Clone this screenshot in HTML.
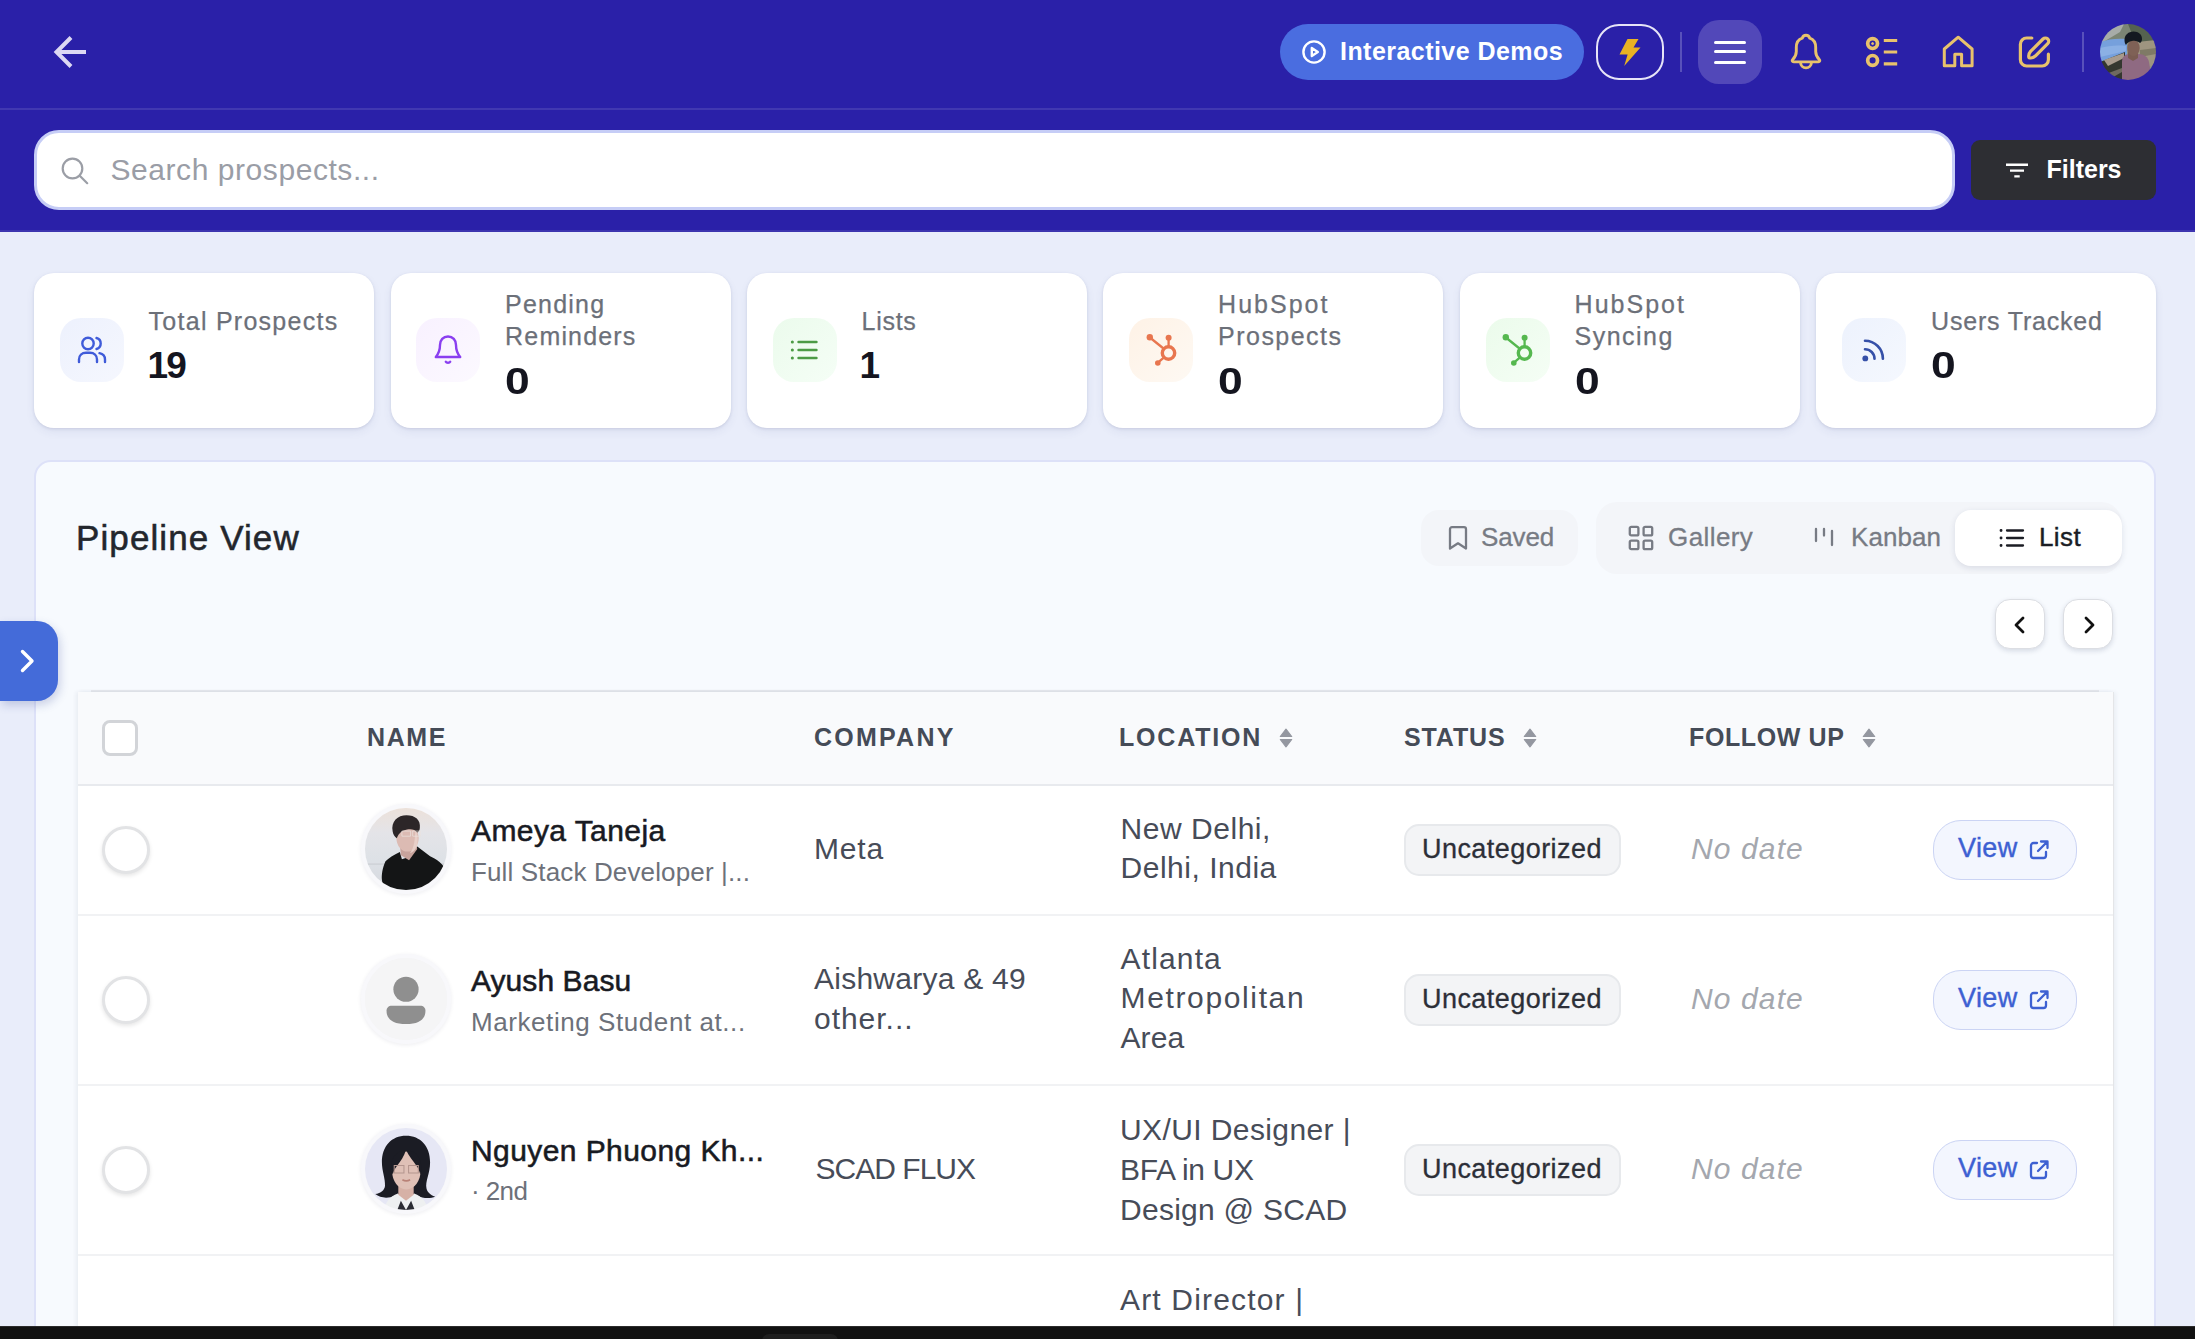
<!DOCTYPE html>
<html lang="en">
<head>
<meta charset="utf-8">
<title>Pipeline View</title>
<style>
*{box-sizing:border-box;margin:0;padding:0}
html,body{width:2195px;height:1339px;overflow:hidden}
body{position:relative;background:#e9edfa;font-family:"Liberation Sans",sans-serif;color:#1b1d26}
.abs{position:absolute}
.t{position:absolute;white-space:nowrap;line-height:1}

/* ---------- top bar ---------- */
.top{position:absolute;left:0;top:0;width:2195px;height:232px;background:#2a20a8}
.top .rule{position:absolute;left:0;top:108px;width:2195px;height:2px;background:rgba(255,255,255,.11)}
.demo{position:absolute;left:1280px;top:24px;width:304px;height:56px;border-radius:28px;background:#4a6de0}
.bolt{position:absolute;left:1596px;top:24px;width:68px;height:56px;border-radius:23px;border:2px solid #e6e4f7}
.vsep{position:absolute;top:32px;width:2px;height:40px;background:rgba(255,255,255,.22)}
.burger{position:absolute;left:1698px;top:20px;width:64px;height:64px;border-radius:21px;background:#5248b9}
.burger i{position:absolute;left:16px;width:32px;height:3px;border-radius:2px;background:#fff}
.me{position:absolute;left:2100px;top:24px;width:56px;height:56px;border-radius:50%;overflow:hidden}

.search{position:absolute;left:34px;top:130px;width:1921px;height:80px;border-radius:25px;background:#fff;border:3.500px solid #c6cdf6}
.filters{position:absolute;left:1971px;top:140px;width:185px;height:60px;border-radius:9px;background:#2d2e33}

/* ---------- stat cards ---------- */
.plate{position:absolute;top:273px;width:340px;height:155px;border-radius:20px;background:#fff;box-shadow:0 1px 3px rgba(40,50,100,.13),0 4px 10px rgba(60,70,130,.07)}
.card{position:absolute;top:273px;width:338.500px;height:155px}
.card .ico{position:absolute;left:25.400px;top:45px;width:64px;height:64px;border-radius:21px}
.card .ico svg{position:absolute;left:0;top:0}
.lbl{font-size:25px;color:#6c7079;letter-spacing:1.05px;-webkit-text-stroke:.25px #6c7079}
.val{font-size:37px;font-weight:700;color:#14151f;transform-origin:0 50%}
.val.z{transform:scaleX(1.2)}

/* ---------- panel ---------- */
.panel{position:absolute;left:34px;top:460px;width:2122px;height:900px;border-radius:17px;background:#f7fafe;border:2px solid #dde1f8}
.h1{font-size:35px;color:#23262d;letter-spacing:1.1px;-webkit-text-stroke:.55px #23262d}
.pill{position:absolute;border-radius:18px;background:#f3f5f9}
.tab{font-size:26px;color:#777b84;-webkit-text-stroke:.3px #777b84}
.on{position:absolute;left:1955px;top:510px;width:167px;height:56px;border-radius:16px;background:#fff;box-shadow:0 2px 6px rgba(30,40,80,.12)}
.pg{position:absolute;top:599px;width:50px;height:50px;border-radius:15px;background:#fff;border:1.500px solid #dcdee3;box-shadow:0 2px 5px rgba(30,40,80,.15)}

/* ---------- table ---------- */
.tbl{position:absolute;left:78px;top:692px;width:2034.500px;height:700px;background:#fff;box-shadow:-2px 0 4px rgba(40,50,90,.07),1px 0 0 #e6e7ea,3px 0 4px rgba(40,50,90,.06)}
.thead{position:absolute;left:0;top:0;width:100%;height:92px;background:#f9fafc}
.hr{position:absolute;left:0;width:100%;height:2px;background:#f1f2f4}
.th{font-size:25px;font-weight:700;color:#454b57;letter-spacing:1.5px}
.cb{position:absolute;left:24px;top:28px;width:36px;height:36px;border-radius:8px;border:3px solid #d2d4d8;background:#fff}
.rad{position:absolute;left:24px;width:48px;height:48px;border-radius:50%;border:3px solid #e2e3e5;background:#fff;box-shadow:0 2px 4px rgba(0,0,0,.10)}
.av{position:absolute;left:283px;width:90px;height:90px;border-radius:50%;background:#fafafa;border:4px solid #f8f8fb;box-shadow:0 1px 4px rgba(30,30,60,.08);overflow:hidden}
.nm{font-size:30px;color:#181a22;letter-spacing:.42px;-webkit-text-stroke:.55px #181a22}
.sub{font-size:26px;color:#6d717a}
.c{font-size:30px;color:#474c58;letter-spacing:.5px}
.badge{position:absolute;left:1326px;width:217px;height:52px;border-radius:15px;background:#f3f4f6;border:2px solid #e7e9ec}
.badge span{position:absolute;left:16px;top:10px;font-size:27px;line-height:1;letter-spacing:.45px;color:#2c2f38;-webkit-text-stroke:.3px #2c2f38;white-space:nowrap}
.nd{font-size:30px;font-style:italic;color:#a4a7ae;letter-spacing:1.12px}
.view{position:absolute;left:1855px;width:144px;height:60px;border-radius:28px;background:#f3f6fe;border:1.500px solid #cbd4f4}
.view span{position:absolute;left:24px;top:14px;font-size:27px;line-height:1;letter-spacing:.4px;color:#3d60d2;-webkit-text-stroke:.4px #3d60d2}
.view svg{position:absolute;left:94px;top:18px}

.av svg,.me svg{display:block}
.photo{filter:blur(.7px)}
.side{position:absolute;left:0;top:621px;width:58px;height:80px;border-radius:0 21px 21px 0;background:#446bd9;box-shadow:2px 4px 10px rgba(40,60,140,.22)}
.dock{position:absolute;left:0;top:1326px;width:2195px;height:13px;background:#111;border-top:1px solid #2b2b2b}
.dock i{position:absolute;left:762px;top:7px;width:76px;height:8px;border-radius:7px 7px 0 0;background:#1e1e1e}
</style>
</head>
<body>

<!-- ================= TOP BAR ================= -->
<div class="top">
  <div class="rule"></div><div class="rule" style="top:230px;background:rgba(255,255,255,.09)"></div>
  <svg class="abs" style="left:52px;top:34px" width="38" height="36" viewBox="0 0 38 36" fill="none" stroke="#dcd8f3" stroke-width="4" stroke-linecap="butt" stroke-linejoin="miter"><path d="M34 18H5M19 3.5L4.5 18 19 32.5"/></svg>

  <div class="demo">
    <svg class="abs" style="left:22px;top:16px" width="24" height="24" viewBox="0 0 24 24" fill="none" stroke="#fff" stroke-width="2.4" stroke-linejoin="round"><circle cx="12" cy="12" r="10.6"/><path d="M9.8 8l6 4-6 4z"/></svg>
    <span class="t" style="left:60px;top:15px;font-size:25px;font-weight:700;color:#fff;letter-spacing:.45px">Interactive Demos</span>
  </div>
  <div class="bolt">
    <svg class="abs" style="left:21px;top:12.500px" width="22" height="27" viewBox="0 0 22 27"><path d="M8.5 0h11l-5 8.6h7L5.2 27l3.4-11.6H.5z" fill="#e9b223"/></svg>
  </div>
  <div class="vsep" style="left:1680px"></div>
  <div class="burger"><i style="top:21px"></i><i style="top:30px"></i><i style="top:41px"></i></div>

  <!-- bell -->
  <svg class="abs" style="left:1790px;top:33px" width="32" height="38" viewBox="0 0 32 38" fill="none" stroke="#e8c26c" stroke-width="2.9" stroke-linejoin="round" stroke-linecap="round"><path d="M16 2.2c-2 0-3.300 1.300-3.700 3C8.300 6.500 6.300 10 6.300 14.500v4c0 3.200-1.200 5.700-3.600 8-1 1-.5 2.400 1 2.400h24.600c1.500 0 2-1.400 1-2.400-2.400-2.300-3.600-4.800-3.600-8v-4c0-4.500-2-8-6-9.300-.4-1.700-1.700-3-3.700-3z"/><path d="M10.600 29.500a5.400 5.400 0 0 0 10.800 0"/></svg>
  <!-- list -->
  <svg class="abs" style="left:1864px;top:35px" width="36" height="34" viewBox="0 0 36 34" fill="none" stroke="#e8c26c" stroke-width="3.2"><circle cx="8.600" cy="8.600" r="4.900" stroke-width="3.700"/><circle cx="8.600" cy="25.400" r="4.900" stroke-width="3.700"/><circle cx="8.600" cy="8.600" r="1" fill="#e8c26c" stroke-width="1"/><path d="M19.800 5.500h13.400M19.800 17h13.400M19.800 28.800h13.400"/></svg>
  <!-- home -->
  <svg class="abs" style="left:1942px;top:35px" width="33" height="34" viewBox="0 0 33 34" fill="none" stroke="#e8c26c" stroke-width="3" stroke-linejoin="round"><path d="M16.200 2.200L2.300 14v16.800h10.500V19.300h6.800v11.500h10.500V14z"/></svg>
  <!-- edit -->
  <svg class="abs" style="left:2018px;top:35px" width="33" height="34" viewBox="0 0 33 34" fill="none" stroke="#e8c26c" stroke-width="3.200" stroke-linecap="round" stroke-linejoin="round"><path d="M13.800 3H8.600a6.200 6.200 0 0 0-6.200 6.200v15.600A6.200 6.200 0 0 0 8.600 31h15.600a6.200 6.200 0 0 0 6.200-6.200v-5.600"/><path d="M12.600 16.400L25 4a3.300 3.300 0 0 1 4.700 4.700L17.300 21.100c-2 1.600-4.600 2.200-6.300 1.600-.600-1.800 0-4.400 1.600-6.300z"/></svg>

  <div class="vsep" style="left:2082px"></div>
  <div class="me">
    <svg class="photo" width="56" height="56" viewBox="0 0 56 56">
      <rect width="56" height="56" fill="#8f9481"/>
      <path d="M0 0h56v18H0z" fill="#7b8574"/>
      <path d="M0 0h24l-4 8-10 6-10 6z" fill="#a7aca8"/>
      <path d="M28 0h20l8 14v6H36z" fill="#55624f"/>
      <path d="M0 18c8-3 18-4 27-3v16L0 40z" fill="#76a0dc"/>
      <path d="M0 24c8-2 16-3 26-2v5L0 33z" fill="#8bb0e4"/>
      <path d="M37 18l19-2v26H37z" fill="#9e9580"/>
      <path d="M40 26l16-2v6l-16 3z" fill="#7f7a66"/>
      <path d="M0 38l25-10v28H0z" fill="#34372f"/>
      <path d="M4 36l20-7v5L8 42z" fill="#a89b8d"/>
      <path d="M6 50l16-6v4L8 56z" fill="#6f6a60"/>
      <path d="M22 56V38c0-5 3-8 7-8h10c5 0 9 3 10 8l3 18z" fill="#8f6a82"/>
      <path d="M28 28h10v6l-5 3-5-3z" fill="#7a5c52"/>
      <ellipse cx="33.500" cy="24" rx="6.200" ry="8" fill="#7f6156"/>
      <path d="M24.500 16c0-5 4-8.500 9-8.500s9 3 8.500 8c-.200 2-1 3-2 3.500-2-2-5-2.500-8-2-3 .500-5 2-6 4-1-1-1.500-3-1.500-5z" fill="#131920"/>
    </svg>
  </div>

  <div class="search">
    <svg class="abs" style="left:22.500px;top:22.500px" width="30" height="30" viewBox="0 0 30 30" fill="none" stroke="#9b9ea6" stroke-width="2.200" stroke-linecap="round"><circle cx="12.500" cy="12.500" r="9.800"/><path d="M20 20l7.200 7.200"/></svg>
    <span class="t" style="left:73.500px;top:11.500px;font-size:30px;line-height:50px;color:#9a9da6;letter-spacing:.56px">Search prospects...</span>
  </div>
  <div class="filters">
    <svg class="abs" style="left:34px;top:23px" width="24" height="16" viewBox="0 0 24 16" fill="none" stroke="#fff" stroke-width="2.400"><path d="M1 1.800h22M5 7.600h14M9.300 13.400h5.400"/></svg>
    <span class="t" style="left:75.500px;top:17px;font-size:25px;font-weight:700;color:#fff">Filters</span>
  </div>
</div>

<!-- ================= STAT CARDS ================= -->
<div class="plate" style="left:34.300px"></div><div class="plate" style="left:390.600px"></div><div class="plate" style="left:746.900px"></div><div class="plate" style="left:1103.200px"></div><div class="plate" style="left:1459.500px"></div><div class="plate" style="left:1815.800px"></div>
<div class="card" style="left:34.600px">
  <div class="ico" style="background:linear-gradient(135deg,#edf1fd,#f5f7fe)">
    <svg width="64" height="64" viewBox="0 0 64 64" fill="none" stroke="#3f5bd9" stroke-width="2.400" stroke-linecap="round"><circle cx="28" cy="25.500" r="5.700"/><path d="M19 44v-2.500c0-4 3-6.700 7-6.700h4c4 0 7 2.700 7 6.700V44"/><path d="M36.500 20a5.700 5.700 0 0 1 0 11"/><path d="M39.500 35.200c3.300.7 5.500 3.100 5.500 6.300V44"/></svg>
  </div>
  <span class="t lbl" style="left:114px;top:36px;letter-spacing:1.26px">Total Prospects</span>
  <span class="t val" style="left:113px;top:74px;letter-spacing:-1.8px">19</span>
</div>

<div class="card" style="left:391.100px">
  <div class="ico" style="background:linear-gradient(135deg,#f8f1ff,#fcf9ff)">
    <svg width="64" height="64" viewBox="0 0 64 64" fill="none" stroke="#8a3ff0" stroke-width="2.400" stroke-linecap="round" stroke-linejoin="round"><path d="M32 18.500c-4.800 0-8 3.600-8 8.500 0 6.500-2.200 9.600-4.200 12h24.400c-2-2.400-4.200-5.500-4.200-12 0-4.900-3.200-8.500-8-8.500z"/><path d="M29.800 43.800c.7 1.300 3.700 1.300 4.400 0"/></svg>
  </div>
  <span class="t lbl" style="left:114px;top:19px;letter-spacing:1.2px">Pending</span>
  <span class="t lbl" style="left:114px;top:51px;letter-spacing:1.17px">Reminders</span>
  <span class="t val z" style="left:114px;top:90px">0</span>
</div>

<div class="card" style="left:747.600px">
  <div class="ico" style="background:linear-gradient(135deg,#ebfbec,#f5fef6)">
    <svg width="64" height="64" viewBox="0 0 64 64" fill="none" stroke="#4c9b45" stroke-width="2.400" stroke-linecap="round"><path d="M25.500 24h18M25.500 32h18M25.500 40h18"/><path d="M19.300 24h.1M19.300 32h.1M19.300 40h.1" stroke-width="3"/></svg>
  </div>
  <span class="t lbl" style="left:114px;top:36px;letter-spacing:.7px">Lists</span>
  <span class="t val" style="left:112px;top:74px">1</span>
</div>

<div class="card" style="left:1104.100px">
  <div class="ico" style="background:linear-gradient(135deg,#fef2e6,#fef9f3)">
    <svg style="left:1.500px" width="64" height="64" viewBox="0 0 64 64" fill="none" stroke="#e8764f" stroke-width="2.300" stroke-linecap="round"><circle cx="37.500" cy="35" r="6.200" stroke-width="3.400"/><circle cx="18.800" cy="19.200" r="3.200" fill="#e8764f" stroke="none"/><circle cx="37.600" cy="19.800" r="3" fill="#e8764f" stroke="none"/><circle cx="26.800" cy="45" r="2.800" fill="#e8764f" stroke="none"/><path d="M19.500 20l13 10.500M37.600 20.500v8M27.500 44.200l5.300-4.600"/></svg>
  </div>
  <span class="t lbl" style="left:114px;top:19px;letter-spacing:2px">HubSpot</span>
  <span class="t lbl" style="left:114px;top:51px;letter-spacing:1.46px">Prospects</span>
  <span class="t val z" style="left:114px;top:90px">0</span>
</div>

<div class="card" style="left:1460.600px">
  <div class="ico" style="background:linear-gradient(135deg,#ebfbeb,#f5fef5)">
    <svg style="left:1.500px" width="64" height="64" viewBox="0 0 64 64" fill="none" stroke="#55b84f" stroke-width="2.300" stroke-linecap="round"><circle cx="37.500" cy="35" r="6.200" stroke-width="3.400"/><circle cx="18.800" cy="19.200" r="3.200" fill="#55b84f" stroke="none"/><circle cx="37.600" cy="19.800" r="3" fill="#55b84f" stroke="none"/><circle cx="26.800" cy="45" r="2.800" fill="#55b84f" stroke="none"/><path d="M19.500 20l13 10.500M37.600 20.500v8M27.500 44.200l5.300-4.600"/></svg>
  </div>
  <span class="t lbl" style="left:114px;top:19px;letter-spacing:2px">HubSpot</span>
  <span class="t lbl" style="left:114px;top:51px;letter-spacing:1.46px">Syncing</span>
  <span class="t val z" style="left:114px;top:90px">0</span>
</div>

<div class="card" style="left:1817.100px">
  <div class="ico" style="background:linear-gradient(135deg,#edf2fd,#f5f8fe)">
    <svg width="64" height="64" viewBox="0 0 64 64" fill="none" stroke="#3650a8" stroke-width="2.600" stroke-linecap="round"><path d="M23 31.200a9.500 9.500 0 0 1 9.500 9.500M23 22.800a17.900 17.900 0 0 1 17.900 17.900"/><circle cx="23.300" cy="40.400" r="2.900" fill="#3650a8" stroke="none"/></svg>
  </div>
  <span class="t lbl" style="left:114px;top:36px;letter-spacing:.81px">Users Tracked</span>
  <span class="t val z" style="left:114px;top:74px">0</span>
</div>

<!-- ================= PANEL ================= -->
<div class="panel"></div>
<span class="t h1" style="left:76px;top:520px">Pipeline View</span>

<div class="pill" style="left:1421px;top:510px;width:157px;height:56px"></div>
<svg class="abs" style="left:1447px;top:525px" width="22" height="26" viewBox="0 0 22 26" fill="none" stroke="#777b84" stroke-width="2.300" stroke-linejoin="round"><path d="M3 4.200a2 2 0 0 1 2-2h12a2 2 0 0 1 2 2v19.300l-8-5.200-8 5.200z"/></svg>
<span class="t tab" style="left:1481px;top:524px;letter-spacing:-.1px">Saved</span>

<div class="pill" style="left:1596px;top:502px;width:526px;height:72px;border-radius:21px"></div>
<svg class="abs" style="left:1628px;top:525px" width="26" height="26" viewBox="0 0 26 26" fill="none" stroke="#777b84" stroke-width="2.300" stroke-linejoin="round"><rect x="1.800" y="1.800" width="8.600" height="8.600" rx="1.500"/><rect x="15.600" y="1.800" width="8.600" height="8.600" rx="1.500"/><rect x="1.800" y="15.600" width="8.600" height="8.600" rx="1.500"/><rect x="15.600" y="15.600" width="8.600" height="8.600" rx="1.500"/></svg>
<span class="t tab" style="left:1668px;top:524px;letter-spacing:.42px">Gallery</span>
<svg class="abs" style="left:1814px;top:527px" width="20" height="22" viewBox="0 0 20 22" fill="none" stroke="#777b84" stroke-width="2.300" stroke-linecap="round"><path d="M2 2v12M10 2v6.500M18 4v14"/></svg>
<span class="t tab" style="left:1851px;top:524px;letter-spacing:.06px">Kanban</span>
<div class="on"></div>
<svg class="abs" style="left:1999px;top:528px" width="26" height="20" viewBox="0 0 26 20" fill="none" stroke="#1b1d24" stroke-width="2.300" stroke-linecap="round"><path d="M8 2.500h16M8 10h16M8 17.500h16"/><path d="M2 2.500h.1M2 10h.1M2 17.500h.1" stroke-width="2.800"/></svg>
<span class="t tab" style="left:2039px;top:524px;color:#1b1d24;letter-spacing:.39px;-webkit-text-stroke:.4px #1b1d24">List</span>

<div class="pg" style="left:1995px"><svg class="abs" style="left:16px;top:15px" width="16" height="20" viewBox="0 0 16 20" fill="none" stroke="#111" stroke-width="2.800" stroke-linecap="round" stroke-linejoin="round"><path d="M11 3L4 10l7 7"/></svg></div>
<div class="pg" style="left:2063px"><svg class="abs" style="left:17px;top:15px" width="16" height="20" viewBox="0 0 16 20" fill="none" stroke="#111" stroke-width="2.800" stroke-linecap="round" stroke-linejoin="round"><path d="M5 3l7 7-7 7"/></svg></div>

<div class="abs" style="left:91px;top:690px;width:2008px;height:2px;background:#e9ebef"></div>

<!-- ================= TABLE ================= -->
<div class="tbl">
  <div class="thead"></div>
  <div class="cb"></div>
  <span class="t th" style="left:289px;top:32.500px;letter-spacing:1.6px">NAME</span>
  <span class="t th" style="left:736px;top:32.500px;letter-spacing:2.24px">COMPANY</span>
  <span class="t th" style="left:1041px;top:32.500px;letter-spacing:1.82px">LOCATION</span>
  <span class="t th" style="left:1326px;top:32.500px;letter-spacing:0.88px">STATUS</span>
  <span class="t th" style="left:1611px;top:32.500px;letter-spacing:0.61px">FOLLOW UP</span>
  <svg class="abs" style="left:1201px;top:36px" width="14" height="20" viewBox="0 0 14 20" fill="#9497a0" stroke="#9497a0" stroke-width="1.200" stroke-linejoin="round"><path d="M7 1.200l5.700 7.300H1.300zM7 18.800l5.700-7.300H1.300z"/></svg>
  <svg class="abs" style="left:1445px;top:36px" width="14" height="20" viewBox="0 0 14 20" fill="#9497a0" stroke="#9497a0" stroke-width="1.200" stroke-linejoin="round"><path d="M7 1.200l5.700 7.300H1.300zM7 18.800l5.700-7.300H1.300z"/></svg>
  <svg class="abs" style="left:1784px;top:36px" width="14" height="20" viewBox="0 0 14 20" fill="#9497a0" stroke="#9497a0" stroke-width="1.200" stroke-linejoin="round"><path d="M7 1.200l5.700 7.300H1.300zM7 18.800l5.700-7.300H1.300z"/></svg>
  <div class="hr" style="top:92px;background:#e8eaee"></div>

  <!-- row 1 : 786-914 => local 94-222, centre 158 -->
  <div class="rad" style="top:134px"></div>
  <div class="av" style="top:111.500px">
    <svg class="photo" width="82" height="82" viewBox="0 0 80 80">
      <defs><linearGradient id="g1" x1="0" y1="0" x2="0" y2="1"><stop offset="0" stop-color="#ece1da"/><stop offset=".3" stop-color="#e4e4e8"/><stop offset=".65" stop-color="#dde1e6"/><stop offset="1" stop-color="#d6d8de"/></linearGradient></defs>
      <rect width="80" height="80" fill="url(#g1)"/>
      <rect y="54" width="80" height="1.500" fill="#cfd2d8"/>
      <path d="M34 43C28 46 23 49 20 52c-3 6-4 14-3.500 18L18 80h62V62c-4-8-10-12-16.500-15L51 37.500 45 47l-9 3z" fill="#141516"/>
      <path d="M34 35l1 11 8 5 8-11-1.500-8z" fill="#c7a39c"/>
      <ellipse cx="41.500" cy="29.500" rx="10.800" ry="13" fill="#dcbbb3"/>
      <path d="M49 20c2 4 3 10 2 16-1 4-4 7-7 8 4-5 5-14 5-24z" fill="#e8cfc8"/>
      <path d="M27 23c-2-10 5-16 13.500-16 8.500 0 14 4.500 13 12.500-.300 2.500-1 3.500-2.500 4.500-2-3-6-4-10-3-5 1-8 3.500-10 8.500-2-1-3.500-3.500-4-6.500z" fill="#2c2628"/>
      <path d="M36 22.500h8.500v5H36zM46.500 22.500H54v5h-7.500z" fill="none" stroke="#ebe3e0" stroke-width=".800" opacity=".85"/>
    </svg>
  </div>
  <span class="t nm" style="left:393px;top:124px">Ameya Taneja</span>
  <span class="t sub" style="left:393px;top:167px;letter-spacing:.14px">Full Stack Developer |...</span>
  <span class="t c" style="left:736px;top:142px;letter-spacing:.8px">Meta</span>
  <span class="t c" style="left:1042.500px;top:122px;letter-spacing:.54px">New Delhi,</span>
  <span class="t c" style="left:1042.500px;top:161px;letter-spacing:.52px">Delhi, India</span>
  <div class="badge" style="top:132px"><span>Uncategorized</span></div>
  <span class="t nd" style="left:1613px;top:141.500px">No date</span>
  <div class="view" style="top:128px"><span>View</span><svg width="22" height="22" viewBox="0 0 22 22" fill="none" stroke="#3d60d2" stroke-width="2.300" stroke-linecap="round" stroke-linejoin="round"><path d="M9 4H5.500A2.500 2.500 0 0 0 3 6.500v10A2.500 2.500 0 0 0 5.500 19h10a2.500 2.500 0 0 0 2.500-2.500V13"/><path d="M13 2.500h6.500V9M19 3l-9 9"/></svg></div>
  <div class="hr" style="top:222px"></div>

  <!-- row 2 : 916-1084 => local 224-392, centre 308 -->
  <div class="rad" style="top:284px"></div>
  <div class="av" style="top:262px;background:#f4f4f5">
    <svg width="82" height="82" viewBox="0 0 80 80"><rect width="80" height="80" fill="#f5f5f6"/><circle cx="40" cy="30.500" r="12.300" fill="#8f8f8f"/><path d="M21 51.500c0-3 2-5 5-5h28c3 0 5 2 5 5 0 8-6 13-19 13s-19-5-19-13z" fill="#8f8f8f"/></svg>
  </div>
  <span class="t nm" style="left:393px;top:274px;letter-spacing:.07px">Ayush Basu</span>
  <span class="t sub" style="left:393px;top:317px;letter-spacing:.57px">Marketing Student at...</span>
  <span class="t c" style="left:736px;top:272px;letter-spacing:.25px">Aishwarya &amp; 49</span>
  <span class="t c" style="left:736px;top:312px;letter-spacing:.97px">other...</span>
  <span class="t c" style="left:1042.500px;top:252px;letter-spacing:1.15px">Atlanta</span>
  <span class="t c" style="left:1042.500px;top:291px;letter-spacing:1.64px">Metropolitan</span>
  <span class="t c" style="left:1042.500px;top:331px;letter-spacing:.11px">Area</span>
  <div class="badge" style="top:282px"><span>Uncategorized</span></div>
  <span class="t nd" style="left:1613px;top:291.500px">No date</span>
  <div class="view" style="top:278px"><span>View</span><svg width="22" height="22" viewBox="0 0 22 22" fill="none" stroke="#3d60d2" stroke-width="2.300" stroke-linecap="round" stroke-linejoin="round"><path d="M9 4H5.500A2.500 2.500 0 0 0 3 6.500v10A2.500 2.500 0 0 0 5.500 19h10a2.500 2.500 0 0 0 2.500-2.500V13"/><path d="M13 2.500h6.500V9M19 3l-9 9"/></svg></div>
  <div class="hr" style="top:392px"></div>

  <!-- row 3 : 1086-1254 => local 394-562, centre 478 -->
  <div class="rad" style="top:454px"></div>
  <div class="av" style="top:431.500px">
    <svg class="photo" width="82" height="82" viewBox="0 0 80 80">
      <rect width="80" height="80" fill="#e6e7f5"/>
      <path d="M40 7.500c-14 0-23.500 10-23.500 26 0 9 3.500 16 3 23-.400 4-4 7-9.500 8 5 4 13 4.500 19 1.500L40 62l11 4c5.500 3 13 3 17.500 1-5-2-7.500-4-8.500-8-1.500-7 3.500-14 3.500-25.500 0-16-9.500-26-23.500-26z" fill="#1b1c24"/>
      <path d="M19 80c1-8 5-13 13-16l8 5 8-5c8 3 12 8 13 16z" fill="#eef0f1"/>
      <path d="M32.500 56h15v9l-7.500 6-7.500-6z" fill="#d6b1a6"/>
      <ellipse cx="40.300" cy="41.500" rx="14" ry="18.500" fill="#dfc0b6"/>
      <path d="M25.500 38c.500-10 6-16 14.500-16.500-2 6-5 11-8.500 15-2 2.500-3.500 5-4.500 9-1-2.500-1.500-5-1.500-7.500zM55 38c-.500-10-6-16-15-16.500 3 6 7 11 10 15 2 2.500 3 5 4 9 .800-2.500 1-5 1-7.500z" fill="#1b1c24"/>
      <path d="M35 71l5 9h-8.500zM45 71l-5 9h8.500z" fill="#2b2c34"/>
      <path d="M28.500 36.500H38v7.500h-9.500zM42.500 36.500H52v7.500h-9.500z" fill="none" stroke="#b4958e" stroke-width="1"/>
      <path d="M36.500 50.500c2 1.200 5.500 1.200 7.500 0" fill="none" stroke="#b98277" stroke-width="1.600"/>
    </svg>
  </div>
  <span class="t nm" style="left:393px;top:444px">Nguyen Phuong Kh...</span>
  <span class="t sub" style="left:393px;top:486px;letter-spacing:-.6px">· 2nd</span>
  <span class="t c" style="left:737.500px;top:462px;letter-spacing:-.98px">SCAD FLUX</span>
  <span class="t c" style="left:1042px;top:422.500px;letter-spacing:.4px">UX/UI Designer |</span>
  <span class="t c" style="left:1042px;top:462.500px;letter-spacing:-.35px">BFA in UX</span>
  <span class="t c" style="left:1042px;top:502.500px;letter-spacing:.27px">Design @ SCAD</span>
  <div class="badge" style="top:452px"><span>Uncategorized</span></div>
  <span class="t nd" style="left:1613px;top:461.500px">No date</span>
  <div class="view" style="top:448px"><span>View</span><svg width="22" height="22" viewBox="0 0 22 22" fill="none" stroke="#3d60d2" stroke-width="2.300" stroke-linecap="round" stroke-linejoin="round"><path d="M9 4H5.500A2.500 2.500 0 0 0 3 6.500v10A2.500 2.500 0 0 0 5.500 19h10a2.500 2.500 0 0 0 2.500-2.500V13"/><path d="M13 2.500h6.500V9M19 3l-9 9"/></svg></div>
  <div class="hr" style="top:562px"></div>

  <!-- row 4 (clipped) -->
  <span class="t c" style="left:1042px;top:593px;letter-spacing:1.17px">Art Director |</span>
</div>

<!-- side drawer handle -->
<div class="side"><svg class="abs" style="left:19px;top:27px" width="16" height="26" viewBox="0 0 16 26" fill="none" stroke="#fff" stroke-width="3.400" stroke-linecap="round" stroke-linejoin="round"><path d="M3.500 3.500l9.500 9.500-9.500 9.500"/></svg></div>

<div class="dock"><i></i></div>
</body>
</html>
